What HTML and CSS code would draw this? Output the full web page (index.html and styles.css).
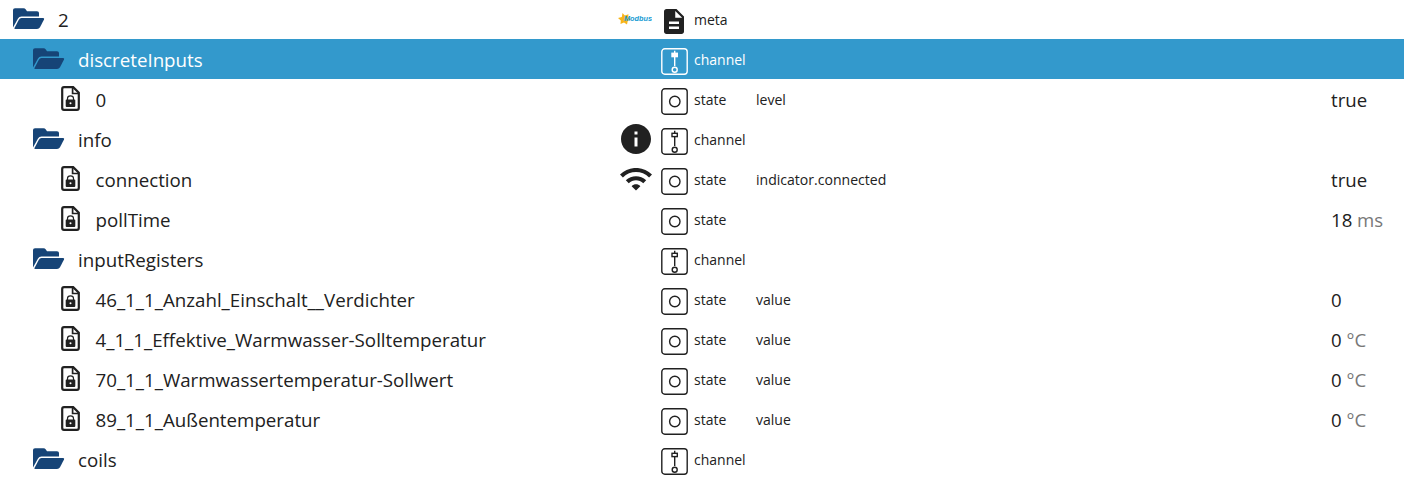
FILE: index.html
```html
<!DOCTYPE html>
<html lang="de">
<head>
<meta charset="utf-8">
<title>Objects</title>
<link rel="stylesheet" href="styles.css">
</head>
<body>
<svg class="defs" aria-hidden="true">
  <symbol id="folder" viewBox="0 0 32 22"><path d="M0 19.500V2Q0 .3 2 .3H10.500Q12 .3 12.800 1.500L14 3.300H24Q26 3.300 26 5V8.500H8.500Q6 8.500 5 10.500Z"/><path d="M8.500 10H30.200Q31.700 10 31 11.500L27 19.200Q26 21 24 21H2Q1 21 1.500 19.900L5.700 11.900Q6.700 10 8.500 10Z"/></symbol>
  <symbol id="file" viewBox="0 0 19 25"><path d="M3 1.200H12.200L17.800 6.800V22Q17.800 23.800 16 23.800H3Q1.200 23.800 1.200 22V3Q1.200 1.200 3 1.200Z" fill="none" stroke="currentColor" stroke-width="2.200"/><path d="M11.600 1.500V7.500H17.500" fill="none" stroke="currentColor" stroke-width="1.700"/><path d="M6.500 14V12.500Q6.500 9.800 9.500 9.800T12.500 12.500V14" fill="none" stroke="currentColor" stroke-width="1.200"/><path fill-rule="evenodd" d="M5.500 13.500H13.500Q14.300 13.500 14.300 14.300V20Q14.300 21 13.300 21H5.700Q4.700 21 4.700 20V14.300Q4.700 13.500 5.500 13.500ZM9.500 16.300A1 1 0 0 0 9.500 18.300A1 1 0 0 0 9.500 16.300Z"/></symbol>
  <symbol id="meta" viewBox="4 2 16 20"><path d="M14 2H6c-1.100 0-1.990.9-1.990 2L4 20c0 1.100.89 2 1.990 2H18c1.100 0 2-.9 2-2V8l-6-6zm2 16H8v-2h8v2zm0-4H8v-2h8v2zm-3-5V3.500L18.500 9H13z"/></symbol>
  <symbol id="state" viewBox="0 0 27 27"><g fill="none" stroke="currentColor" stroke-width="1.400"><rect x=".8" y=".8" width="25.400" height="25.400" rx="3"/><circle cx="13.800" cy="13.500" r="5.200"/></g></symbol>
  <symbol id="channel" viewBox="0 0 27 27"><g fill="none" stroke="currentColor" stroke-width="1.400"><rect x=".8" y=".8" width="25.400" height="25.400" rx="3"/><path d="M13.700 2.800V5.300M13.700 8.600V18"/><rect class="knob" x="11" y="5.300" width="5.300" height="3.300"/><circle cx="13.700" cy="21.800" r="2.500"/></g></symbol>
  <symbol id="info" viewBox="2 2 20 20"><path d="M12 2C6.480 2 2 6.480 2 12s4.480 10 10 10 10-4.480 10-10S17.520 2 12 2zm1 15h-2v-6h2v6zm0-8h-2V7h2v2z"/></symbol>
  <symbol id="wifi" viewBox="1 4.500 22 16.500"><path d="M1 9l2 2c4.970-4.970 13.030-4.970 18 0l2-2C16.930 2.930 7.080 2.930 1 9zm8 8l3 3 3-3c-1.650-1.660-4.340-1.660-6 0zm-4-4l2 2c2.760-2.760 7.240-2.760 10 0l2-2C15.140 9.140 8.870 9.140 5 13z"/></symbol>
</svg>
<main class="tree">
  <div class="row"><div class="name root"><svg class="folder"><use href="#folder"/></svg><span>2</span></div><div class="icon"><svg class="modbus" viewBox="0 0 34 12"><path fill="#f7b519" d="M4.500 0L6.800 2.500L10.500 1.200L10 4.500L13 6.500L9.800 7.800L9 11.500L6 9.500L2.500 11L2.800 7.500L0 5L3.800 4Z"/><text x="6" y="8.300" textLength="28" lengthAdjust="spacingAndGlyphs">Modbus</text></svg></div><div class="type"><svg class="meta"><use href="#meta"/></svg><span>meta</span></div><div class="role"></div><div class="value"></div></div>
  <div class="row selected"><div class="name branch"><svg class="folder"><use href="#folder"/></svg><span>discreteInputs</span></div><div class="icon"></div><div class="type"><svg class="box"><use href="#channel"/></svg><span>channel</span></div><div class="role"></div><div class="value"></div></div>
  <div class="row"><div class="name leaf"><svg class="file"><use href="#file"/></svg><span>0</span></div><div class="icon"></div><div class="type"><svg class="box"><use href="#state"/></svg><span>state</span></div><div class="role">level</div><div class="value">true</div></div>
  <div class="row"><div class="name branch"><svg class="folder"><use href="#folder"/></svg><span>info</span></div><div class="icon"><svg class="info"><use href="#info"/></svg></div><div class="type"><svg class="box"><use href="#channel"/></svg><span>channel</span></div><div class="role"></div><div class="value"></div></div>
  <div class="row"><div class="name leaf"><svg class="file"><use href="#file"/></svg><span>connection</span></div><div class="icon"><svg class="wifi"><use href="#wifi"/></svg></div><div class="type"><svg class="box"><use href="#state"/></svg><span>state</span></div><div class="role">indicator.connected</div><div class="value">true</div></div>
  <div class="row"><div class="name leaf"><svg class="file"><use href="#file"/></svg><span>pollTime</span></div><div class="icon"></div><div class="type"><svg class="box"><use href="#state"/></svg><span>state</span></div><div class="role"></div><div class="value">18 <span class="unit">ms</span></div></div>
  <div class="row"><div class="name branch"><svg class="folder"><use href="#folder"/></svg><span>inputRegisters</span></div><div class="icon"></div><div class="type"><svg class="box"><use href="#channel"/></svg><span>channel</span></div><div class="role"></div><div class="value"></div></div>
  <div class="row"><div class="name leaf"><svg class="file"><use href="#file"/></svg><span>46_1_1_Anzahl_Einschalt__Verdichter</span></div><div class="icon"></div><div class="type"><svg class="box"><use href="#state"/></svg><span>state</span></div><div class="role">value</div><div class="value">0</div></div>
  <div class="row"><div class="name leaf"><svg class="file"><use href="#file"/></svg><span>4_1_1_Effektive_Warmwasser-Solltemperatur</span></div><div class="icon"></div><div class="type"><svg class="box"><use href="#state"/></svg><span>state</span></div><div class="role">value</div><div class="value">0 <span class="unit">°C</span></div></div>
  <div class="row"><div class="name leaf"><svg class="file"><use href="#file"/></svg><span>70_1_1_Warmwassertemperatur-Sollwert</span></div><div class="icon"></div><div class="type"><svg class="box"><use href="#state"/></svg><span>state</span></div><div class="role">value</div><div class="value">0 <span class="unit">°C</span></div></div>
  <div class="row"><div class="name leaf"><svg class="file"><use href="#file"/></svg><span>89_1_1_Außentemperatur</span></div><div class="icon"></div><div class="type"><svg class="box"><use href="#state"/></svg><span>state</span></div><div class="role">value</div><div class="value">0 <span class="unit">°C</span></div></div>
  <div class="row"><div class="name branch"><svg class="folder"><use href="#folder"/></svg><span>coils</span></div><div class="icon"></div><div class="type"><svg class="box"><use href="#channel"/></svg><span>channel</span></div><div class="role"></div><div class="value"></div></div>
</main>
</body>
</html>
```
FILE: styles.css
```css
body {
  margin: 0;
  height: 479px;
  overflow: hidden;
  background: #fff;
  color: #212121;
  font-family: "Open Sans", "Noto Sans", sans-serif;
}
.defs { display: none; }
svg { display: block; flex: none; fill: currentColor; }
.tree { margin-top: -1px; }
.row {
  display: grid;
  grid-template-columns: 616px 40px 100px 575px 73px;
  height: 40px;
  line-height: 40px;
  white-space: nowrap;
}
.selected { --knob: #fff; background: #3399cc; color: #fff; }
.name, .icon, .type { display: flex; align-items: center; }
.name { font-size: 18.73px; }
.value { font-size: 18.6px; }
.name span, .value { padding-top: 1px; }
.root { padding-left: 13px; gap: 13px; }
.branch { padding-left: 33px; gap: 13px; }
.leaf { padding-left: 61px; gap: 15.5px; }
.folder { width: 32px; height: 22px; margin-bottom: 2px; color: #164477; }
.file { width: 19px; height: 25px; margin-bottom: 3px; }
.icon { justify-content: center; }
.modbus { width: 34px; height: 12px; margin: 0 0 2px -2px; }
.modbus text {
  font: italic bold 7.5px "Liberation Sans", sans-serif;
  fill: #169bd3;
}
.info { width: 30px; height: 30px; margin: 0 0 1px; }
.wifi { width: 32px; height: 24px; }
.type { padding-left: 5px; font-size: 14px; gap: 6px; }
.box { width: 27px; height: 27px; margin-top: 3px; }
.meta { width: 20px; height: 25px; margin: 3px 4px 0 3px; }
.knob { fill: var(--knob, none); }
.role { font-size: 14.05px; padding-top: 1px; }
.unit { color: #777; }
```
